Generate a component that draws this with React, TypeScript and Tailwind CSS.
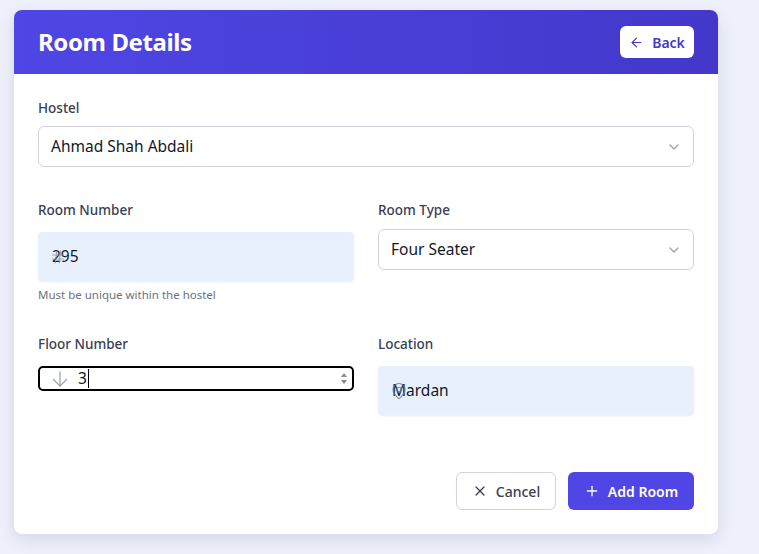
import React from "react";
import { ArrowLeft, ChevronDown, Hash, MapPin, X, Plus } from "lucide-react";

const font = { fontFamily: '"Noto Sans", "Open Sans", sans-serif' };

export default function App() {
  return (
    <div className="min-h-[554px] w-full bg-[#eef1fb] pt-[10px] pl-[14px] pr-[41px] pb-[21px]" style={font}>
      <div className="w-[704px] overflow-hidden rounded-lg bg-white shadow-[0_6px_16px_rgba(30,40,90,0.12)]">
        <div className="flex h-[64px] items-center justify-between bg-linear-to-r from-[#4f46e5] to-[#4338ca] px-6">
          <h1 className="text-[24px] font-bold tracking-[-0.4px] text-white">Room Details</h1>
          <button className="flex h-[32px] w-[74px] items-center justify-center gap-2 rounded-md bg-white text-[14px] font-semibold text-[#4338ca]">
            <ArrowLeft size={15} strokeWidth={1.8} />
            Back
          </button>
        </div>

        <div className="px-6 pt-6 pb-6">
          <div>
            <label className="block text-[13.5px] leading-5 font-medium text-[#374151]">Hostel</label>
            <div className="relative mt-2 flex h-[41px] items-center rounded-md border border-[#d1d5db] px-3 text-[15.5px] text-[#111827]">
              Ahmad Shah Abdali
              <ChevronDown size={16} className="absolute right-[11px] text-[#9ca3af]" />
            </div>
          </div>

          <div className="mt-[33px] grid grid-cols-2 gap-x-6">
            <div>
              <label className="block text-[13.5px] leading-5 font-medium text-[#374151]">Room Number</label>
              <div className="relative mt-3 flex h-[49px] items-center rounded-[4px] bg-[#e8f0fe] px-3.5 text-[15.5px] text-[#111827] shadow-[0_1px_2px_rgba(0,0,0,0.08)]">
                <span>295</span>
                <Hash size={16} strokeWidth={1.6} className="absolute left-[12px] z-10 text-[#8b8f98] opacity-80" />
              </div>
              <p className="mt-1.5 text-[11.5px] leading-4 text-[#6b7280]">Must be unique within the hostel</p>
            </div>
            <div>
              <label className="block text-[13.5px] leading-5 font-medium text-[#374151]">Room Type</label>
              <div className="relative mt-[9px] flex h-[41px] items-center rounded-md border border-[#d1d5db] px-3 text-[15.5px] text-[#111827]">
                Four Seater
                <ChevronDown size={16} className="absolute right-[11px] text-[#9ca3af]" />
              </div>
            </div>
          </div>

          <div className="mt-[31px] grid grid-cols-2 gap-x-6">
            <div>
              <label className="block text-[13.5px] leading-5 font-medium text-[#374151]">Floor Number</label>
              <div className="relative mt-3 flex h-[25px] items-center rounded-[5px] border-2 border-black pl-[38px] text-[15.5px] text-[#111827]">
                <svg width="16" height="16" viewBox="0 0 16 16" fill="none" stroke="#9ca3af" strokeWidth="1.3" strokeLinecap="round" strokeLinejoin="round" className="absolute left-[12px]">
                  <path d="M8 1v14" />
                  <path d="M1.5 8.5 8 15l6.5-6.5" />
                </svg>
                <span>3</span>
                <span className="ml-[1px] h-[19px] w-px bg-black" />
                <div className="absolute right-[5px] flex flex-col items-center gap-[3px]">
                  <div className="h-0 w-0 border-x-[3px] border-b-[4px] border-x-transparent border-b-[#8a8a8a]" />
                  <div className="h-0 w-0 border-x-[3px] border-t-[4px] border-x-transparent border-t-[#8a8a8a]" />
                </div>
              </div>
            </div>
            <div>
              <label className="block text-[13.5px] leading-5 font-medium text-[#374151]">Location</label>
              <div className="relative mt-3 flex h-[49px] items-center rounded-[4px] bg-[#e8f0fe] px-3.5 text-[15.5px] text-[#111827] shadow-[0_1px_2px_rgba(0,0,0,0.08)]">
                <span>Mardan</span>
                <MapPin size={18} strokeWidth={1.6} className="absolute left-[12px] z-10 text-[#6b7280] opacity-80" />
              </div>
            </div>
          </div>

          <div className="mt-[57px] flex justify-end gap-3">
            <button className="flex h-[38px] w-[100px] items-center justify-center gap-2 rounded-md border border-[#d1d5db] bg-white text-[14px] font-medium text-[#374151]">
              <X size={16} strokeWidth={1.8} />
              Cancel
            </button>
            <button className="flex h-[38px] w-[126px] items-center justify-center gap-2 rounded-md bg-[#4f46e5] text-[14px] font-semibold text-white">
              <Plus size={16} strokeWidth={2} />
              Add Room
            </button>
          </div>
        </div>
      </div>
    </div>
  );
}
